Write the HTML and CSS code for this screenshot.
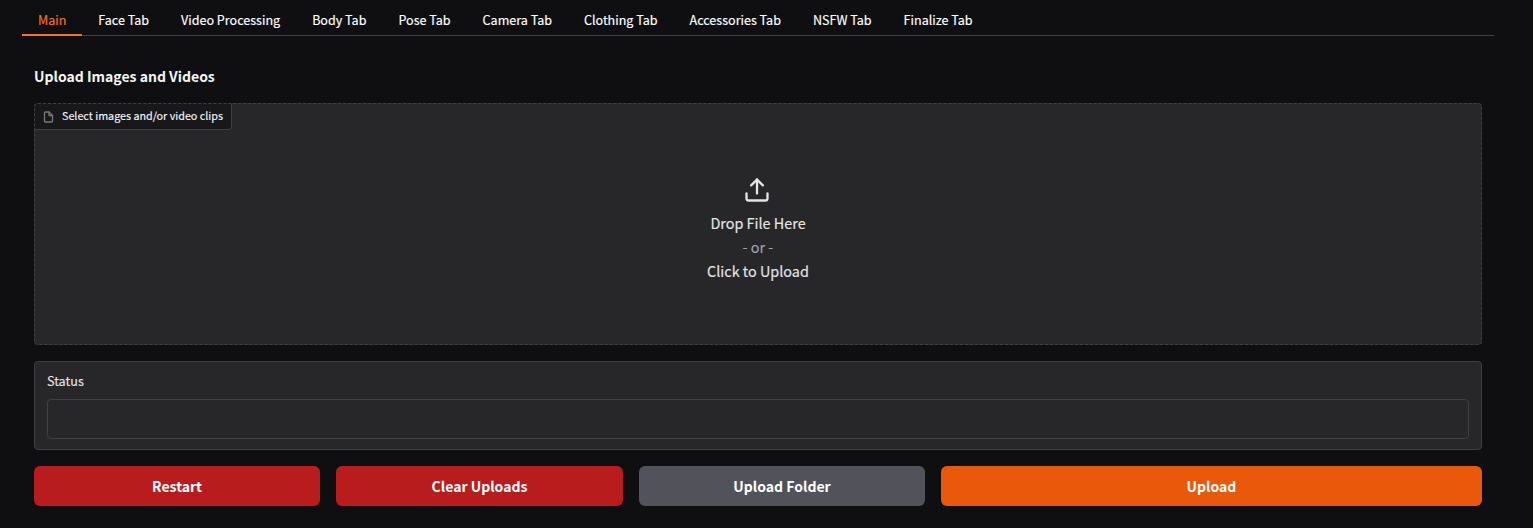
FILE: index.html
```html
<!DOCTYPE html>
<html lang="en">
<head>
<meta charset="utf-8">
<title>Upload Images and Videos</title>
<link rel="stylesheet" href="styles.css">
</head>
<body>
<main class="app">
  <nav class="tabs">
    <button class="tab selected">Main</button>
    <button class="tab">Face Tab</button>
    <button class="tab">Video Processing</button>
    <button class="tab">Body Tab</button>
    <button class="tab">Pose Tab</button>
    <button class="tab">Camera Tab</button>
    <button class="tab">Clothing Tab</button>
    <button class="tab">Accessories Tab</button>
    <button class="tab">NSFW Tab</button>
    <button class="tab">Finalize Tab</button>
  </nav>
  <section class="panel">
    <h3 class="title">Upload Images and Videos</h3>
    <div class="dropzone">
      <div class="file-label">
        <svg class="file-icon" viewBox="0 0 24 24" fill="none" stroke="currentColor" stroke-width="2.6" stroke-linecap="round" stroke-linejoin="round"><path d="M13 2H6a2 2 0 0 0-2 2v16a2 2 0 0 0 2 2h12a2 2 0 0 0 2-2V9z"/><path d="M13 2v7h7"/></svg>
        <span>Select images and/or video clips</span>
      </div>
      <div class="prompt">
        <svg class="upload-icon" viewBox="0 0 24 24" fill="none" stroke="currentColor" stroke-width="2" stroke-linecap="round" stroke-linejoin="round"><path d="M21 15v4a2 2 0 0 1-2 2H5a2 2 0 0 1-2-2v-4"/><path d="M17 8l-5-5-5 5"/><path d="M12 3v12"/></svg>
        <span>Drop File Here</span>
        <span class="or">- or -</span>
        <span>Click to Upload</span>
      </div>
    </div>
    <div class="status">
      <label class="status-label" for="status">Status</label>
      <input class="status-input" id="status" type="text" readonly>
    </div>
    <div class="actions">
      <button class="btn stop">Restart</button>
      <button class="btn stop">Clear Uploads</button>
      <button class="btn secondary">Upload Folder</button>
      <button class="btn primary">Upload</button>
    </div>
  </section>
</main>
</body>
</html>
```
FILE: styles.css
```css
* { box-sizing: border-box; }
body {
  margin: 0;
  height: 528px;
  overflow: hidden;
  background: #0f0f11;
  color: #f4f4f5;
  font-family: "Noto Sans CJK JP", "Noto Sans", sans-serif;
}
button { font-family: inherit; border: 0; margin: 0; }
.app { width: 1472px; margin-left: 22px; }
.tabs {
  display: flex;
  height: 36px;
  box-shadow: inset 0 -1px #3f3f46;
}
.tab {
  padding: 4px 16px 0;
  height: 36px;
  background: none;
  color: #fff;
  font-size: 12.55px;
  line-height: 20px;
  white-space: nowrap;
  -webkit-text-stroke: 0.15px currentColor;
}
.tab.selected { color: #f97316; box-shadow: inset 0 -2px #f97316; }
.panel { padding: 28px 12px 0; }
.title { margin: 0; height: 39px; font-size: 14px; line-height: 24px; font-weight: 700; }
.dropzone {
  position: relative;
  display: flex;
  justify-content: center;
  height: 242px;
  padding-top: 73px;
  border: 1px dashed #3f3f46;
  border-radius: 4px;
  background: #27272a;
}
.file-label {
  position: absolute;
  top: -1px;
  left: -1px;
  display: flex;
  align-items: center;
  width: 198px;
  height: 27px;
  padding-left: 7px;
  border: 1px solid #3f3f46;
  border-radius: 4px 0 4px 0;
  border-top-style: dashed;
  border-left-style: dashed;
  background: #18181b;
  font-size: 10.75px;
  line-height: 16px;
  white-space: nowrap;
  -webkit-text-stroke: 0.15px currentColor;
}
.file-label span { padding-bottom: 1px; }
.file-icon { width: 13px; height: 12px; margin-right: 7px; color: #77777d; }
.prompt {
  display: flex;
  flex-direction: column;
  align-items: center;
  font-size: 14.4px;
  line-height: 24px;
  color: #e4e4e7;
  -webkit-text-stroke: 0.15px currentColor;
}
.upload-icon { width: 28px; height: 28px; margin: -1.5px 2px 7.5px 0; }
.or { color: #a1a1aa; }
.status {
  height: 89px;
  margin-top: 16px;
  padding: 9px 12px;
  border: 1px solid #3f3f46;
  border-radius: 4px;
  background: #27272a;
}
.status-label {
  display: block;
  height: 28px;
  font-size: 12.6px;
  line-height: 20px;
  color: #e4e4e7;
  -webkit-text-stroke: 0.15px currentColor;
}
.status-input {
  display: block;
  width: 100%;
  height: 40px;
  border: 1px solid #3f3f46;
  border-radius: 4px;
  background: #27272a;
}
.actions { display: grid; grid-template-columns: 286px 287px 286px 541px; gap: 16px; margin-top: 16px; }
.btn {
  height: 40px;
  padding: 0;
  border-radius: 6px;
  color: #fff;
  font-size: 14px;
  font-weight: 700;
  line-height: 24px;
}
.stop { background: #b91c1c; }
.secondary { background: #52525b; }
.primary { background: #ea580c; }
```
